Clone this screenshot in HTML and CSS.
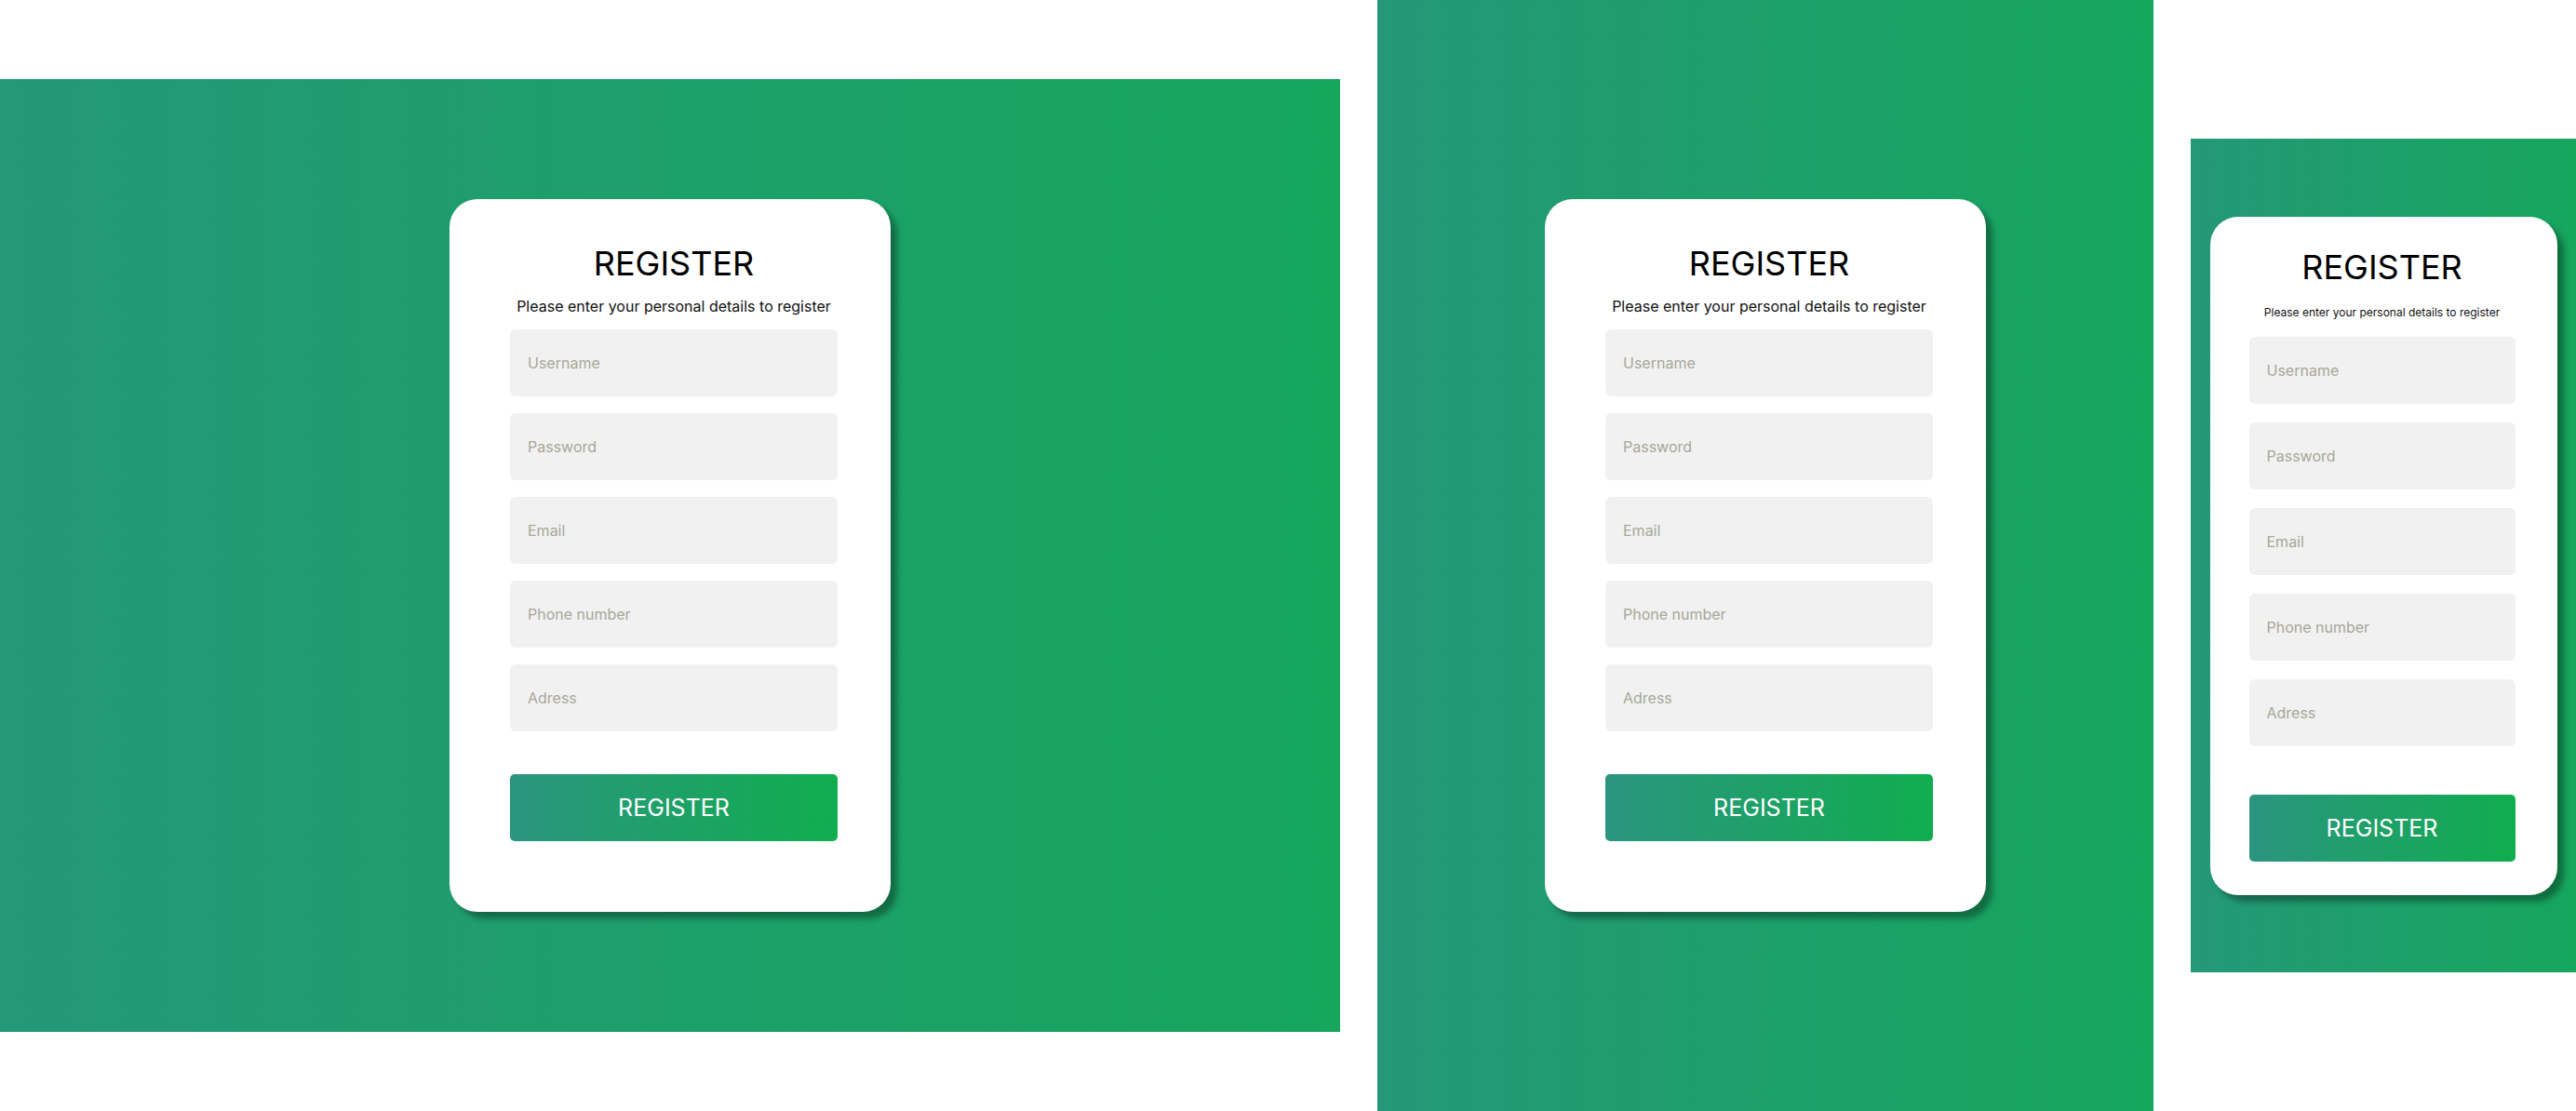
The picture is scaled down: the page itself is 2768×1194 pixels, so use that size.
FILE: index.html
```html
<!DOCTYPE html>
<html lang="en">
<head>
<meta charset="utf-8">
<title>Register</title>
<link rel="stylesheet" href="styles.css">
</head>
<body>
<div class="showcase">
  <section class="screen screen--desktop">
    <form class="card card--wide">
      <h1 class="card__title">REGISTER</h1>
      <p class="card__subtitle">Please enter your personal details to register</p>
      <div class="fields">
        <input class="field" type="text" placeholder="Username">
        <input class="field" type="password" placeholder="Password">
        <input class="field" type="email" placeholder="Email">
        <input class="field" type="tel" placeholder="Phone number">
        <input class="field" type="text" placeholder="Adress">
      </div>
      <button class="submit" type="button">REGISTER</button>
    </form>
  </section>

  <section class="screen screen--tablet">
    <form class="card card--wide">
      <h1 class="card__title">REGISTER</h1>
      <p class="card__subtitle">Please enter your personal details to register</p>
      <div class="fields">
        <input class="field" type="text" placeholder="Username">
        <input class="field" type="password" placeholder="Password">
        <input class="field" type="email" placeholder="Email">
        <input class="field" type="tel" placeholder="Phone number">
        <input class="field" type="text" placeholder="Adress">
      </div>
      <button class="submit" type="button">REGISTER</button>
    </form>
  </section>

  <section class="screen screen--phone">
    <form class="card card--mobile">
      <h1 class="card__title">REGISTER</h1>
      <p class="card__subtitle">Please enter your personal details to register</p>
      <div class="fields">
        <input class="field" type="text" placeholder="Username">
        <input class="field" type="password" placeholder="Password">
        <input class="field" type="email" placeholder="Email">
        <input class="field" type="tel" placeholder="Phone number">
        <input class="field" type="text" placeholder="Adress">
      </div>
      <button class="submit" type="button">REGISTER</button>
    </form>
  </section>
</div>
</body>
</html>
```

FILE: styles.css
```css
* {
  box-sizing: border-box;
}

html, body {
  margin: 0;
  padding: 0;
  background: #ffffff;
}

body {
  font-family: Inter, "Noto Sans", "Liberation Sans", sans-serif;
  color: #000;
}

.showcase {
  display: flex;
  align-items: center;
  gap: 40px;
  width: 2768px;
  height: 1194px;
  overflow: hidden;
}

.screen {
  flex: none;
  display: flex;
  align-items: center;
  justify-content: center;
  background: linear-gradient(90deg, #249878 0%, #16a65c 100%);
}

.screen--desktop {
  width: 1440px;
  height: 1024px;
}

.screen--tablet {
  width: 834px;
  height: 1194px;
}

.screen--phone {
  width: 414px;
  height: 896px;
}

.card {
  display: flex;
  flex-direction: column;
  align-items: stretch;
  background: #ffffff;
  border-radius: 30px;
  box-shadow: 7px 7px 6px rgba(0, 0, 0, 0.34);
  margin: 0;
}

.card--wide {
  width: 474px;
  padding: 46px 57px 76px 65px;
}

.card--mobile {
  width: 373px;
  padding: 31px 45px 36px 42px;
}

.card__title {
  margin: 0;
  font-size: 36px;
  line-height: 46px;
  font-weight: 400;
  text-align: center;
  color: #000;
}

.card__subtitle {
  margin: 13px 0 0;
  font-size: 16px;
  line-height: 20px;
  font-weight: 400;
  text-align: center;
  color: #111;
  white-space: nowrap;
}

.card--mobile .card__subtitle {
  margin-top: 18px;
  font-size: 12px;
  line-height: 15px;
}

.fields {
  display: flex;
  flex-direction: column;
  gap: 18px;
  margin-top: 15px;
}

.card--mobile .fields {
  gap: 20px;
  margin-top: 19px;
}

.field {
  display: block;
  width: 100%;
  height: 72px;
  border: none;
  outline: none;
  border-radius: 6px;
  background: #f1f1f1;
  padding: 0 19px;
  font-family: inherit;
  font-size: 16px;
  color: #333;
}

.field::placeholder {
  color: #a7a799;
  opacity: 1;
}

.submit {
  display: block;
  width: 100%;
  height: 72px;
  margin-top: 46px;
  border: none;
  border-radius: 5px;
  background: linear-gradient(90deg, #2b9580 0%, #10ad4e 100%);
  color: #ffffff;
  font-family: inherit;
  font-size: 25px;
  font-weight: 400;
  cursor: pointer;
}

.card--mobile .submit {
  margin-top: 52px;
}
```
